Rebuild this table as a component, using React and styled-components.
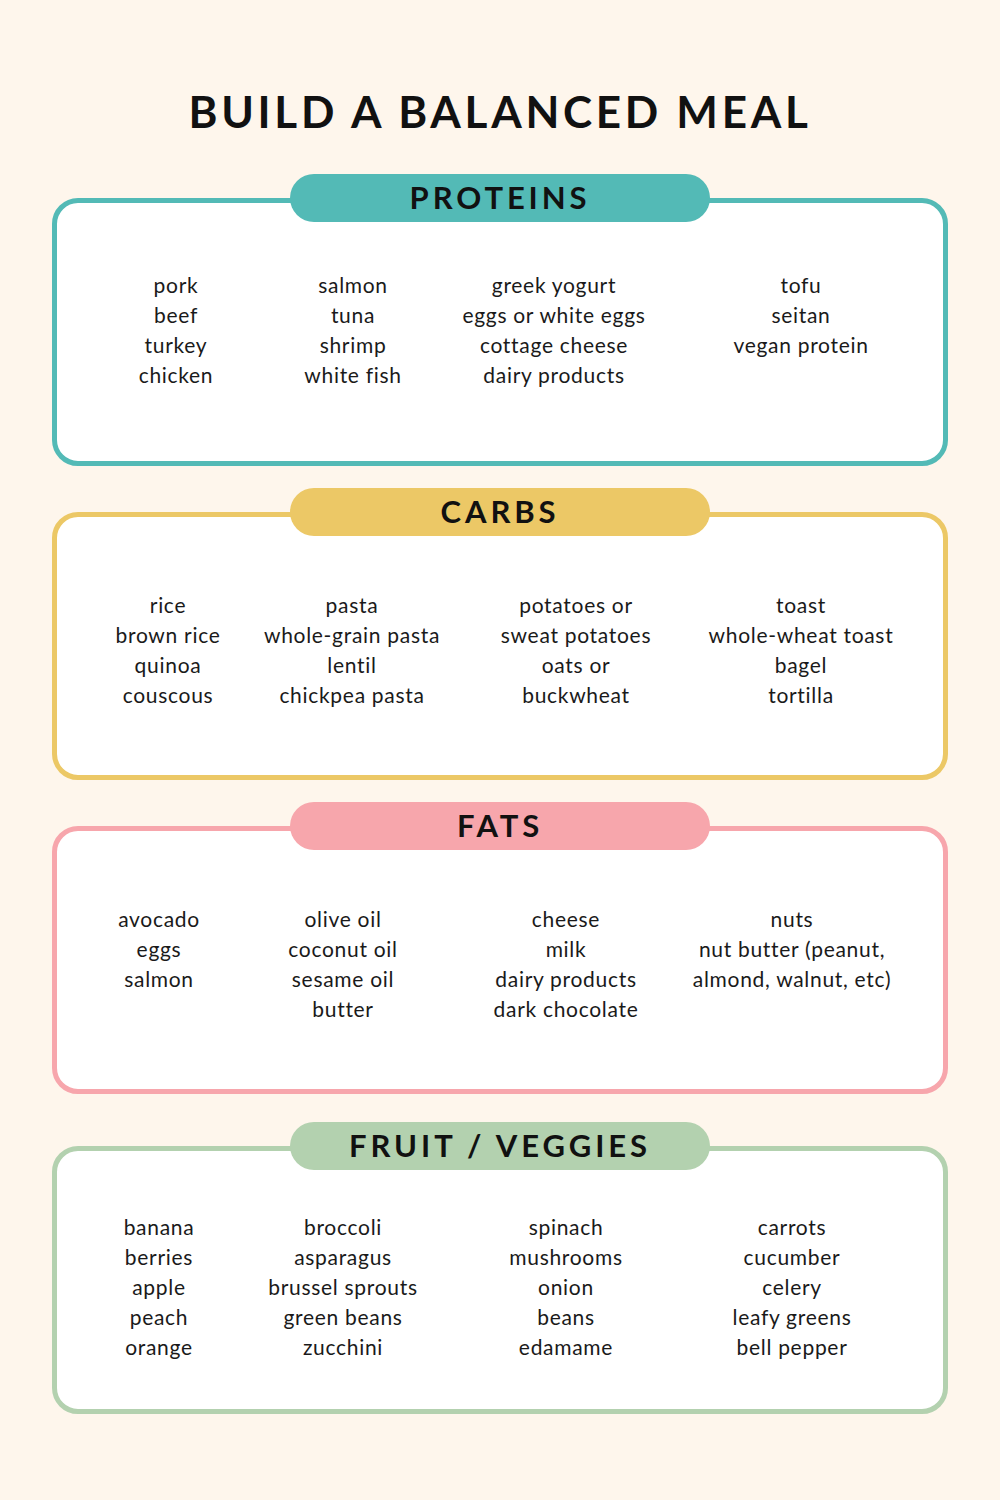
import React from "react";
import styled, { createGlobalStyle } from "styled-components";

const GlobalStyle = createGlobalStyle`
  html, body { margin: 0; padding: 0; }
  body {
    background: #fef6ec;
    font-family: "Lato", "Noto Sans", sans-serif;
    color: #161616;
  }
`;

const Page = styled.main`
  width: 1000px;
  min-height: 1500px;
  box-sizing: border-box;
  padding-top: 85px;
  background: #fef6ec;
  display: flex;
  flex-direction: column;
  align-items: center;
`;

const Title = styled.h1`
  margin: 0 0 37px;
  height: 52px;
  line-height: 52px;
  font-size: 44px;
  font-weight: 700;
  letter-spacing: 3.7px;
  color: #111;
  text-align: center;
`;

const Stack = styled.div`
  display: flex;
  flex-direction: column;
  gap: 22px;
`;

const Section = styled.section`
  display: flex;
  flex-direction: column;
  align-items: center;
  margin-top: ${(p) => p.$extraTop || 0}px;
`;

const Pill = styled.h2`
  position: relative;
  z-index: 1;
  box-sizing: border-box;
  margin: 0 0 -24px;
  padding-bottom: 3px;
  width: 420px;
  height: 48px;
  border-radius: 24px;
  background: ${(p) => p.$color};
  display: flex;
  align-items: center;
  justify-content: center;
  font-size: 31px;
  font-weight: 700;
  letter-spacing: 3.9px;
  color: #111;
`;

const Card = styled.div`
  box-sizing: border-box;
  width: 896px;
  height: 268px;
  border: 5px solid ${(p) => p.$color};
  border-radius: 26px;
  background: #ffffff;
  padding-top: ${(p) => p.$top}px;
  padding-left: ${(p) => p.$left}px;
`;

const Columns = styled.div`
  display: grid;
  grid-template-columns: ${(p) => p.$cols};
`;

const Column = styled.ul`
  list-style: none;
  margin: 0;
  padding: 0;
  text-align: center;
`;

const Item = styled.li`
  font-size: 21px;
  line-height: 30px;
  letter-spacing: 0.7px;
  white-space: nowrap;
  color: #1a1a1a;
`;

const sections = [
  {
    title: "PROTEINS",
    color: "#53bab6",
    top: 67,
    left: 23,
    cols: "192px 162px 240px 254px",
    columns: [
      ["pork", "beef", "turkey", "chicken"],
      ["salmon", "tuna", "shrimp", "white fish"],
      ["greek yogurt", "eggs or white eggs", "cottage cheese", "dairy products"],
      ["tofu", "seitan", "vegan protein"],
    ],
  },
  {
    title: "CARBS",
    color: "#ecc866",
    top: 73,
    left: 43,
    cols: "136px 232px 216px 234px",
    columns: [
      ["rice", "brown rice", "quinoa", "couscous"],
      ["pasta", "whole-grain pasta", "lentil", "chickpea pasta"],
      ["potatoes or", "sweat potatoes", "oats or", "buckwheat"],
      ["toast", "whole-wheat toast", "bagel", "tortilla"],
    ],
  },
  {
    title: "FATS",
    color: "#f7a6ac",
    top: 73,
    left: 33,
    cols: "138px 230px 216px 236px",
    columns: [
      ["avocado", "eggs", "salmon"],
      ["olive oil", "coconut oil", "sesame oil", "butter"],
      ["cheese", "milk", "dairy products", "dark chocolate"],
      ["nuts", "nut butter (peanut,", "almond, walnut, etc)"],
    ],
  },
  {
    title: "FRUIT / VEGGIES",
    color: "#b3d1af",
    top: 61,
    left: 33,
    cols: "138px 230px 216px 236px",
    extraTop: 6,
    columns: [
      ["banana", "berries", "apple", "peach", "orange"],
      ["broccoli", "asparagus", "brussel sprouts", "green beans", "zucchini"],
      ["spinach", "mushrooms", "onion", "beans", "edamame"],
      ["carrots", "cucumber", "celery", "leafy greens", "bell pepper"],
    ],
  },
];

export default function App() {
  return (
    <>
      <GlobalStyle />
      <Page>
        <Title>BUILD A BALANCED MEAL</Title>
        <Stack>
          {sections.map((s) => (
            <Section key={s.title} $extraTop={s.extraTop}>
              <Pill $color={s.color}>{s.title}</Pill>
              <Card $color={s.color} $top={s.top} $left={s.left}>
                <Columns $cols={s.cols}>
                  {s.columns.map((col, i) => (
                    <Column key={i}>
                      {col.map((item) => (
                        <Item key={item}>{item}</Item>
                      ))}
                    </Column>
                  ))}
                </Columns>
              </Card>
            </Section>
          ))}
        </Stack>
      </Page>
    </>
  );
}
